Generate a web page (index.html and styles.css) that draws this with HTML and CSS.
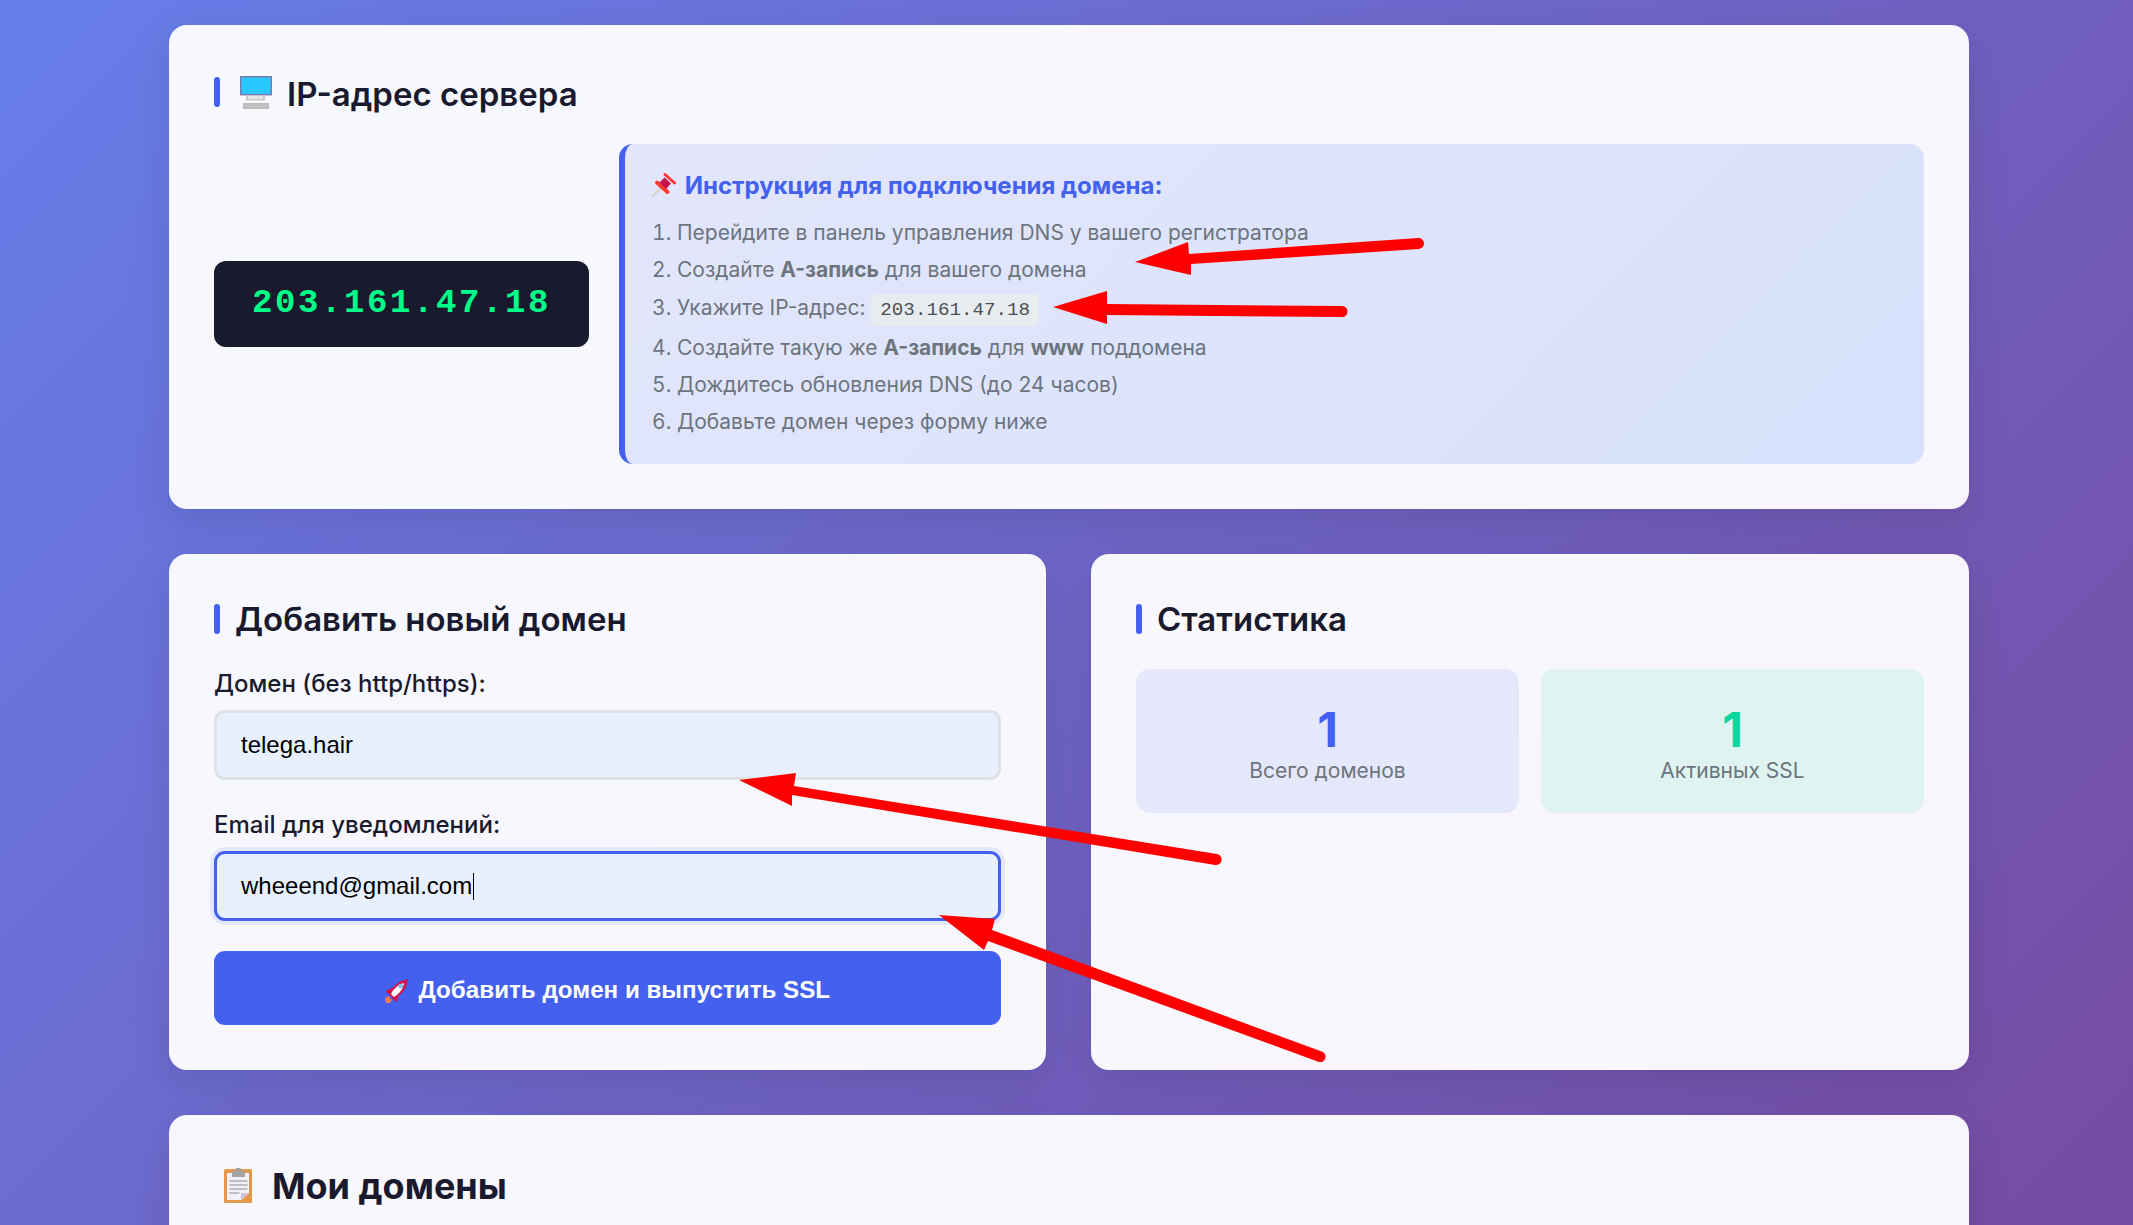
FILE: index.html

```html
<!DOCTYPE html>
<html lang="ru">
<head>
  <meta charset="utf-8">
  <title>Панель доменов</title>
  <link rel="stylesheet" href="styles.css">
</head>
<body>
  <div class="container">
    <section class="card">
      <h2 class="card-title">
        <svg class="emoji-pc" viewBox="0 0 32 33" width="32" height="33">
          <rect x="0.700" y="0.700" width="30.600" height="18" fill="#29c8ff" stroke="#7d79ae" stroke-width="1.400"/>
          <path d="M6 19.500h2v2h15v-2h2v5H6z" fill="#c9c9c9"/>
          <rect x="8" y="20" width="15" height="3" fill="#e4e4e4"/>
          <rect x="3" y="27" width="26" height="6" fill="#bcbcbc"/>
          <path d="M4 29h24M4 31h24" stroke="#d4d4d4" stroke-width="0.700" stroke-dasharray="1 1"/>
        </svg>
        IP-адрес сервера
      </h2>
      <div class="ip-row">
        <div class="ip-box">203.161.47.18</div>
        <div class="howto">
          <h4 class="howto-title">
            <svg class="emoji-sm" viewBox="0 0 24 24" width="24" height="24">
              <path d="M0.700 23L9 15" stroke="#d8d4cc" stroke-width="2" stroke-linecap="round"/>
              <path d="M13 1.500l9.500 8.500" stroke="#fb3a34" stroke-width="3" stroke-linecap="round"/>
              <path d="M5 9.500l10.500 9.500" stroke="#fb3a34" stroke-width="4" stroke-linecap="round"/>
              <path d="M12.500 4.500l6.500 6-5 5.500-6.500-6.500z" fill="#c8144c"/>
            </svg>
            Инструкция для подключения домена:
          </h4>
          <ol class="howto-list">
            <li>Перейдите в панель управления DNS у вашего регистратора</li>
            <li>Создайте <strong>A-запись</strong> для вашего домена</li>
            <li>Укажите IP-адрес: <code>203.161.47.18</code></li>
            <li>Создайте такую же <strong>A-запись</strong> для <strong>www</strong> поддомена</li>
            <li>Дождитесь обновления DNS (до 24 часов)</li>
            <li>Добавьте домен через форму ниже</li>
          </ol>
        </div>
      </div>
    </section>

    <div class="columns">
      <section class="card">
        <h2 class="card-title tight">Добавить новый домен</h2>
        <label class="field-label">Домен (без http/https):</label>
        <div class="field">telega.hair</div>
        <label class="field-label">Email для уведомлений:</label>
        <div class="field focused">wheeend@gmail.com<span class="caret"></span></div>
        <button class="submit">
          <svg class="emoji-sm rocket" viewBox="0 0 24 24" width="24" height="24">
            <path d="M0 19l3-2 4 4-2 3H1z" fill="#f47b4a"/>
            <path d="M0.500 12l6-3-1 8zM11 23l3-6-8 1z" fill="#d4144a"/>
            <path d="M4 15C7 7 14 2 23 0c-1 9-6 16-14 20z" fill="#d4144a"/>
            <path d="M6 15C9 9 13 6 19 4c-1 6-4 10-10 14z" fill="#fff"/>
            <circle cx="15.700" cy="7.200" r="2.400" fill="#7fc4ea"/>
          </svg>
          Добавить домен и выпустить SSL
        </button>
      </section>

      <section class="card">
        <h2 class="card-title tight">Статистика</h2>
        <div class="stats">
          <div class="stat">
            <div class="stat-value">1</div>
            <div class="stat-label">Всего доменов</div>
          </div>
          <div class="stat stat-green">
            <div class="stat-value">1</div>
            <div class="stat-label">Активных SSL</div>
          </div>
        </div>
      </section>
    </div>

    <section class="card">
      <h2 class="card-title plain">
        <svg class="emoji-clip" viewBox="0 0 28 35" width="28" height="35">
          <rect x="0" y="1" width="28" height="34" rx="1.500" fill="#e4984c"/>
          <path d="M3 5h22v20l-8 7H3z" fill="#f2eff8"/>
          <path d="M17 32l8-7h-8z" fill="#c9c3d8"/>
          <rect x="8" y="3" width="13" height="6" rx="1" fill="#a3a3a3"/>
          <rect x="12" y="0" width="5" height="4" rx="1" fill="#a3a3a3"/>
          <path d="M5.500 13h18M5.500 17h18M5.500 21h18M5.500 25h10" stroke="#8d8d8d" stroke-width="1.200"/>
        </svg>
        Мои домены
      </h2>
    </section>
  </div>

  <!-- red arrows drawn over the screenshot -->
  <svg class="arrows" width="2133" height="1225" viewBox="0 0 2133 1225">
    <g fill="#ff0000">
      <path d="M1135 262L1188 242L1189 254L1418 238a5.500 5.500 0 0 1 1 11L1191 264L1191 275z"/>
      <path d="M1053 307L1107 291V304L1342 306a5.500 5.500 0 0 1 0 11L1107 315V324z"/>
      <path d="M739 780L796 773L794 786L1217 854a5.500 5.500 0 0 1-2 11L792 795V806z"/>
      <path d="M939 915L995 919L992 930L1323 1052a5.500 5.500 0 0 1-4 10L988 941L984 950z"/>
    </g>
  </svg>
</body>
</html>
```

FILE: styles.css

```css
* {
  box-sizing: border-box;
}
html, body {
  margin: 0;
  height: 100vh;
  overflow: hidden;
}
body {
  background: linear-gradient(135deg, #667eea 0%, #764ba2 100%);
  color: #1a1a2e;
  font-family: Inter, "Liberation Sans", sans-serif;
  padding: 25px 0 0 169px;
  position: relative;
}
.container {
  width: 1800px;
  display: flex;
  flex-direction: column;
  gap: 45px;
}
.card {
  background: rgba(255, 255, 255, 0.95);
  border-radius: 18px;
  padding: 45px;
  box-shadow: 0 14px 40px rgba(0, 0, 0, 0.1);
}
.card-title {
  display: flex;
  align-items: center;
  gap: 15px;
  height: 48px;
  margin: 0 0 22px;
  font-size: 33px;
  font-weight: 600;
  line-height: 48px;
}
.card-title::before {
  content: "";
  width: 6px;
  height: 30px;
  margin-bottom: 4px;
  border-radius: 3px;
  background: #4361ee;
}
.card-title.tight {
  height: 40px;
  margin-bottom: 30px;
  line-height: 40px;
}
.card-title.tight::before {
  margin-bottom: 1px;
}
.card-title.plain {
  font-size: 36px;
  font-weight: 700;
  padding-top: 4px;
  gap: 20px;
}
.card-title.plain::before {
  display: none;
}
.emoji-pc {
  flex: none;
  margin-left: 5px;
  margin-bottom: 4px;
}
.emoji-clip {
  flex: none;
  margin-left: 10px;
  margin-bottom: 2px;
}
.emoji-sm {
  vertical-align: -3px;
  margin-right: 3px;
}
.rocket {
  vertical-align: -5px;
}

.ip-row {
  display: grid;
  grid-template-columns: 375px 1fr;
  gap: 30px;
  align-items: center;
  margin-top: 26px;
}
.ip-box {
  height: 86px;
  background: #1a1a2e;
  color: #00ff88;
  border-radius: 12px;
  font-family: "Liberation Mono", monospace;
  font-size: 34px;
  font-weight: 700;
  letter-spacing: 2.600px;
  line-height: 84px;
  text-align: center;
}
.howto {
  height: 320px;
  padding: 24px 27px;
  border-left: 6px solid #4361ee;
  border-radius: 14px;
  background: linear-gradient(135deg, #e3e6fb 0%, #d7e1fb 100%);
}
.howto-title {
  margin: 0 0 10px;
  color: #4361ee;
  font-size: 24px;
  font-weight: 700;
  line-height: 36px;
}
.howto-list {
  margin: 0;
  padding: 0 0 0 25px;
  color: #6c757d;
  font-size: 21px;
  line-height: 37.300px;
}
.howto-list strong {
  font-weight: 700;
}
.howto-list code {
  background: #e9ecef;
  color: #495057;
  border-radius: 5px;
  padding: 5px 9px;
  font-family: "Liberation Mono", monospace;
  font-size: 19.200px;
}

.columns {
  display: grid;
  grid-template-columns: 877px 1fr;
  gap: 45px;
}
.field-label {
  display: block;
  font-size: 24px;
  font-weight: 500;
  line-height: 30px;
  margin-bottom: 11px;
  color: #1a1a2e;
}
.field {
  height: 70px;
  margin-bottom: 30px;
  padding: 0 24px;
  border: 3px solid #dee2e6;
  border-radius: 11px;
  background: #e8f0fe;
  color: #000;
  font-family: "Liberation Sans", sans-serif;
  font-size: 24px;
  line-height: 64px;
}
.field.focused {
  border-color: #4361ee;
  box-shadow: 0 0 0 4px rgba(67, 97, 238, 0.1);
}
.caret {
  display: inline-block;
  width: 1px;
  height: 27px;
  margin-left: 1px;
  vertical-align: -6px;
  background: #000;
}
.submit {
  display: block;
  width: 100%;
  height: 74px;
  padding-top: 4px;
  border: none;
  border-radius: 11px;
  background: #4361ee;
  color: #fff;
  font-family: "Liberation Sans", sans-serif;
  font-size: 24.200px;
  font-weight: 700;
}

.stats {
  display: grid;
  grid-template-columns: 1fr 1fr;
  gap: 22px;
}
.stat {
  height: 144px;
  padding-top: 33px;
  border-radius: 14px;
  background: rgba(67, 97, 238, 0.1);
  text-align: center;
}
.stat-green {
  background: rgba(6, 214, 160, 0.1);
}
.stat-value {
  color: #4361ee;
  font-size: 48px;
  font-weight: 700;
  line-height: 55px;
}
.stat-green .stat-value {
  color: #06d6a0;
}
.stat-label {
  color: #6c757d;
  font-size: 21px;
  line-height: 28px;
}

.arrows {
  position: absolute;
  top: 0;
  left: 0;
}
```
